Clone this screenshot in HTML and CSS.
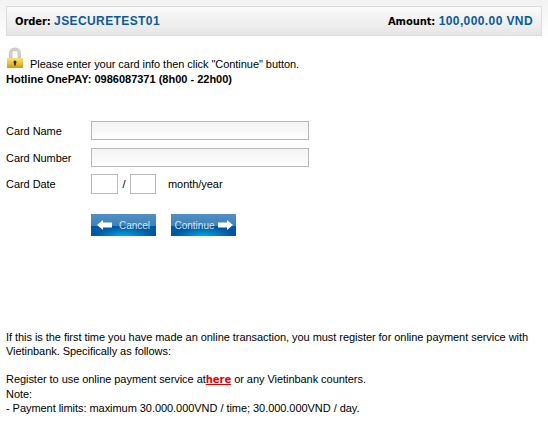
FILE: index.html
```html
<!DOCTYPE html>
<html lang="en">
<head>
    <meta charset="UTF-8">
    <title>Card info</title>
    <link rel="stylesheet" href="styles.css">
</head>
<body>
<div class="order-bar">
    <div class="order-item">Order: <span class="order-value">JSECURETEST01</span></div>
    <div class="order-item">Amount: <span class="order-value">100,000.00 VND</span></div>
</div>
<div class="intro">
    <div class="intro-line">
        <svg class="lock" width="16" height="21" viewBox="0 0 16 21">
            <defs>
                <linearGradient id="lockBody" x1="0" y1="0" x2="0" y2="1">
                    <stop offset="0" stop-color="#f8e27e"/>
                    <stop offset="0.5" stop-color="#edc233"/>
                    <stop offset="1" stop-color="#c99a14"/>
                </linearGradient>
            </defs>
            <path d="M2.5 11V6C2.5 2.5 5 1 8 1S13.5 2.5 13.5 6V11H11V6C11 4.3 9.8 3.4 8 3.4S5 4.3 5 6V11Z" fill="#d4d4d0" stroke="#a5a5a0" stroke-width=".5"/>
            <rect x="0" y="11" width="16" height="10" fill="url(#lockBody)"/>
            <circle cx="8" cy="15" r="1.5" fill="#2b2410"/>
            <rect x="7.2" y="15" width="1.6" height="3.5" fill="#2b2410"/>
        </svg>
        <span>Please enter your card info then click "Continue" button.</span>
    </div>
    <div class="hotline">Hotline OnePAY: 0986087371 (8h00 - 22h00)</div>
</div>
<form class="card-form">
    <div class="form-row">
        <label class="form-label">Card Name</label>
        <input class="text-input" type="text">
    </div>
    <div class="form-row">
        <label class="form-label">Card Number</label>
        <input class="text-input" type="text">
    </div>
    <div class="form-row date-row">
        <label class="form-label">Card Date</label>
        <input class="date-input" type="text">
        <span class="date-sep">/</span>
        <input class="date-input year" type="text">
        <span class="date-hint">month/year</span>
    </div>
    <div class="form-buttons">
        <button class="img-btn" type="button">
            <svg width="15" height="10" viewBox="0 0 15 10"><path d="M0 5L6 0V2.5H15V7.5H6V10Z" fill="#fff"/></svg>
            <span class="cancel-text">Cancel</span>
        </button>
        <button class="img-btn" type="button">
            <span>Continue</span>
            <svg width="15" height="10" viewBox="0 0 15 10"><path d="M15 5L9 0V2.5H0V7.5H9V10Z" fill="#fff"/></svg>
        </button>
    </div>
</form>
<div class="notes">
    <p>If this is the first time you have made an online transaction, you must register for online payment service with Vietinbank. Specifically as follows:</p>
    <p>Register to use online payment service at<a class="here" href="#">here</a> or any Vietinbank counters.<br>
    Note:<br>
    - Payment limits: maximum 30.000.000VND / time; 30.000.000VND / day.</p>
</div>
</body>
</html>
```

FILE: styles.css
```css
body {
    margin: 0;
    padding-top: 6px;
    font-family: "Liberation Sans", Arial, sans-serif;
    font-size: 11px;
    letter-spacing: -0.05px;
    color: #000;
    background: linear-gradient(#f2f2f2, #fff 40px) no-repeat;
}
.order-bar {
    display: flex;
    justify-content: space-between;
    align-items: center;
    box-sizing: border-box;
    height: 30px;
    margin: 0 6px;
    padding: 0 8px;
    border: 1px solid #dcdcdc;
    background: linear-gradient(#fbfbfb, #e6e6e6);
}
.order-item {
    font-family: "DejaVu Sans", sans-serif;
    font-size: 10px;
    font-weight: bold;
    letter-spacing: -0.1px;
}
.order-value {
    font-family: "Liberation Sans", Arial, sans-serif;
    font-size: 12px;
    color: #0a5aa0;
    letter-spacing: 0.4px;
}
.intro {
    margin: 11px 0 0 6px;
}
.intro-line {
    display: flex;
    align-items: flex-end;
    gap: 7px;
    height: 23px;
}
.lock {
    display: block;
    margin: 0 0 2px 1px;
}
.hotline {
    font-weight: bold;
    line-height: 12px;
    letter-spacing: 0;
    margin-top: 3px;
}
.card-form {
    margin: 36px 0 0 6px;
}
.form-row {
    display: flex;
    align-items: center;
    height: 19px;
    margin-bottom: 8px;
}
.form-label {
    width: 85px;
}
.text-input {
    box-sizing: border-box;
    width: 218px;
    height: 19px;
    border: 1px solid #b8b8b8;
    background: linear-gradient(#f3f3f3, #fff);
}
.date-row {
    height: 20px;
    margin-top: -1px;
}
.date-input {
    box-sizing: border-box;
    width: 27px;
    height: 20px;
    border: 1px solid #b8b8b8;
    background: #fff;
}
.date-input.year {
    width: 26px;
}
.date-sep {
    width: 12px;
    text-align: center;
}
.date-hint {
    margin-left: 12px;
}
.form-buttons {
    display: flex;
    gap: 15px;
    margin: 20px 0 0 85px;
}
.img-btn {
    display: flex;
    align-items: center;
    justify-content: center;
    gap: 3px;
    width: 65px;
    height: 22px;
    padding: 0;
    border: none;
    font-family: "Liberation Sans", Arial, sans-serif;
    font-size: 10px;
    color: #d5e6f2;
    background: radial-gradient(ellipse 28px 9px at 50% 100%, #00a8e4, rgba(0, 168, 228, 0)),
        linear-gradient(#4f90c6 0, #3f80b6 56%, #0058a4 56%, #0058a4 100%);
}
.cancel-text {
    margin-left: 4px;
}
.notes {
    margin: 94px 6px 0;
    line-height: 14px;
}
.notes p {
    margin: 0 0 14px;
}
.here {
    font-family: "DejaVu Sans", sans-serif;
    font-size: 10px;
    font-weight: bold;
    color: #e60000;
}
```
